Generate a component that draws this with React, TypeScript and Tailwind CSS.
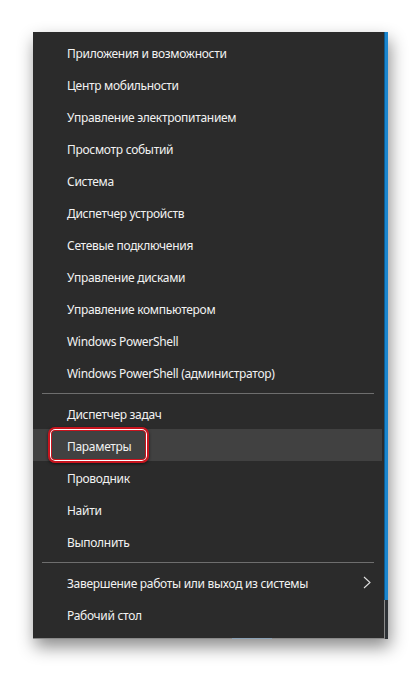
const groups: string[][] = [
  [
    'Приложения и возможности',
    'Центр мобильности',
    'Управление электропитанием',
    'Просмотр событий',
    'Система',
    'Диспетчер устройств',
    'Сетевые подключения',
    'Управление дисками',
    'Управление компьютером',
    'Windows PowerShell',
    'Windows PowerShell (администратор)',
  ],
  ['Диспетчер задач', 'Параметры', 'Проводник', 'Найти', 'Выполнить'],
  ['Завершение работы или выход из системы', 'Рабочий стол'],
]

function Row({ label }: { label: string }) {
  const active = label === 'Параметры'
  const submenu = label.startsWith('Завершение')
  return (
    <div
      className={`relative flex h-8 items-center pl-[34px] pr-[12px] ${active ? 'bg-[#414141] mr-[2px]' : ''}`}
    >
      {active && (
        <div className="absolute left-[15px] top-[-2px] h-[36px] w-[101px] rounded-[7px] border-2 border-[#c8141e] shadow-[0_1px_3px_rgba(0,0,0,0.6),inset_0_0_0_1px_#ffffff,inset_0_0_0_2px_#c8141e]" />
      )}
      <span className="relative flex-1 pt-[3px] text-[12px] tracking-[-0.3px] text-[#f2f2f2]">{label}</span>
      {submenu && (
        <svg width="8" height="13" viewBox="0 0 8 13" className="mr-[1px] mt-[1px]">
          <path d="M1 1 L7 6.5 L1 12" fill="none" stroke="#e0e0e0" strokeWidth="1.1" />
        </svg>
      )}
    </div>
  )
}

export default function App() {
  return (
    <div
      className="h-[673px] w-[420px] bg-white pl-[33px] pt-[32px]"
      style={{ fontFamily: '"Noto Sans", "Open Sans", sans-serif' }}
    >
      <div className="flex w-[355px] shadow-[2px_8px_16px_rgba(0,0,0,0.45)]">
        <div className="flex h-[607px] w-[351px] flex-col bg-[#2b2b2b] pt-[4px] border-b border-[#8a8a8a] relative">
          {groups.map((g, i) => (
            <div key={i}>
              {i > 0 && <div className="mx-[9px] mt-[5px] mb-[3px] h-px bg-[#6e6e6e] mr-[10px]" />}
              {g.map((l) => (
                <Row key={l} label={l} />
              ))}
            </div>
          ))}
          <div className="absolute bottom-[-1px] left-[199px] h-px w-[40px] bg-[#8aa0b4]" />
        </div>
        <div className="flex w-[4px] flex-col">
          <div className="h-[568px] bg-[#1a86cf] border-l border-[#0d5a8f]" />
          <div className="flex-1 bg-[#2e3236] border-l border-[#8a8a8a]" />
        </div>
      </div>
    </div>
  )
}
